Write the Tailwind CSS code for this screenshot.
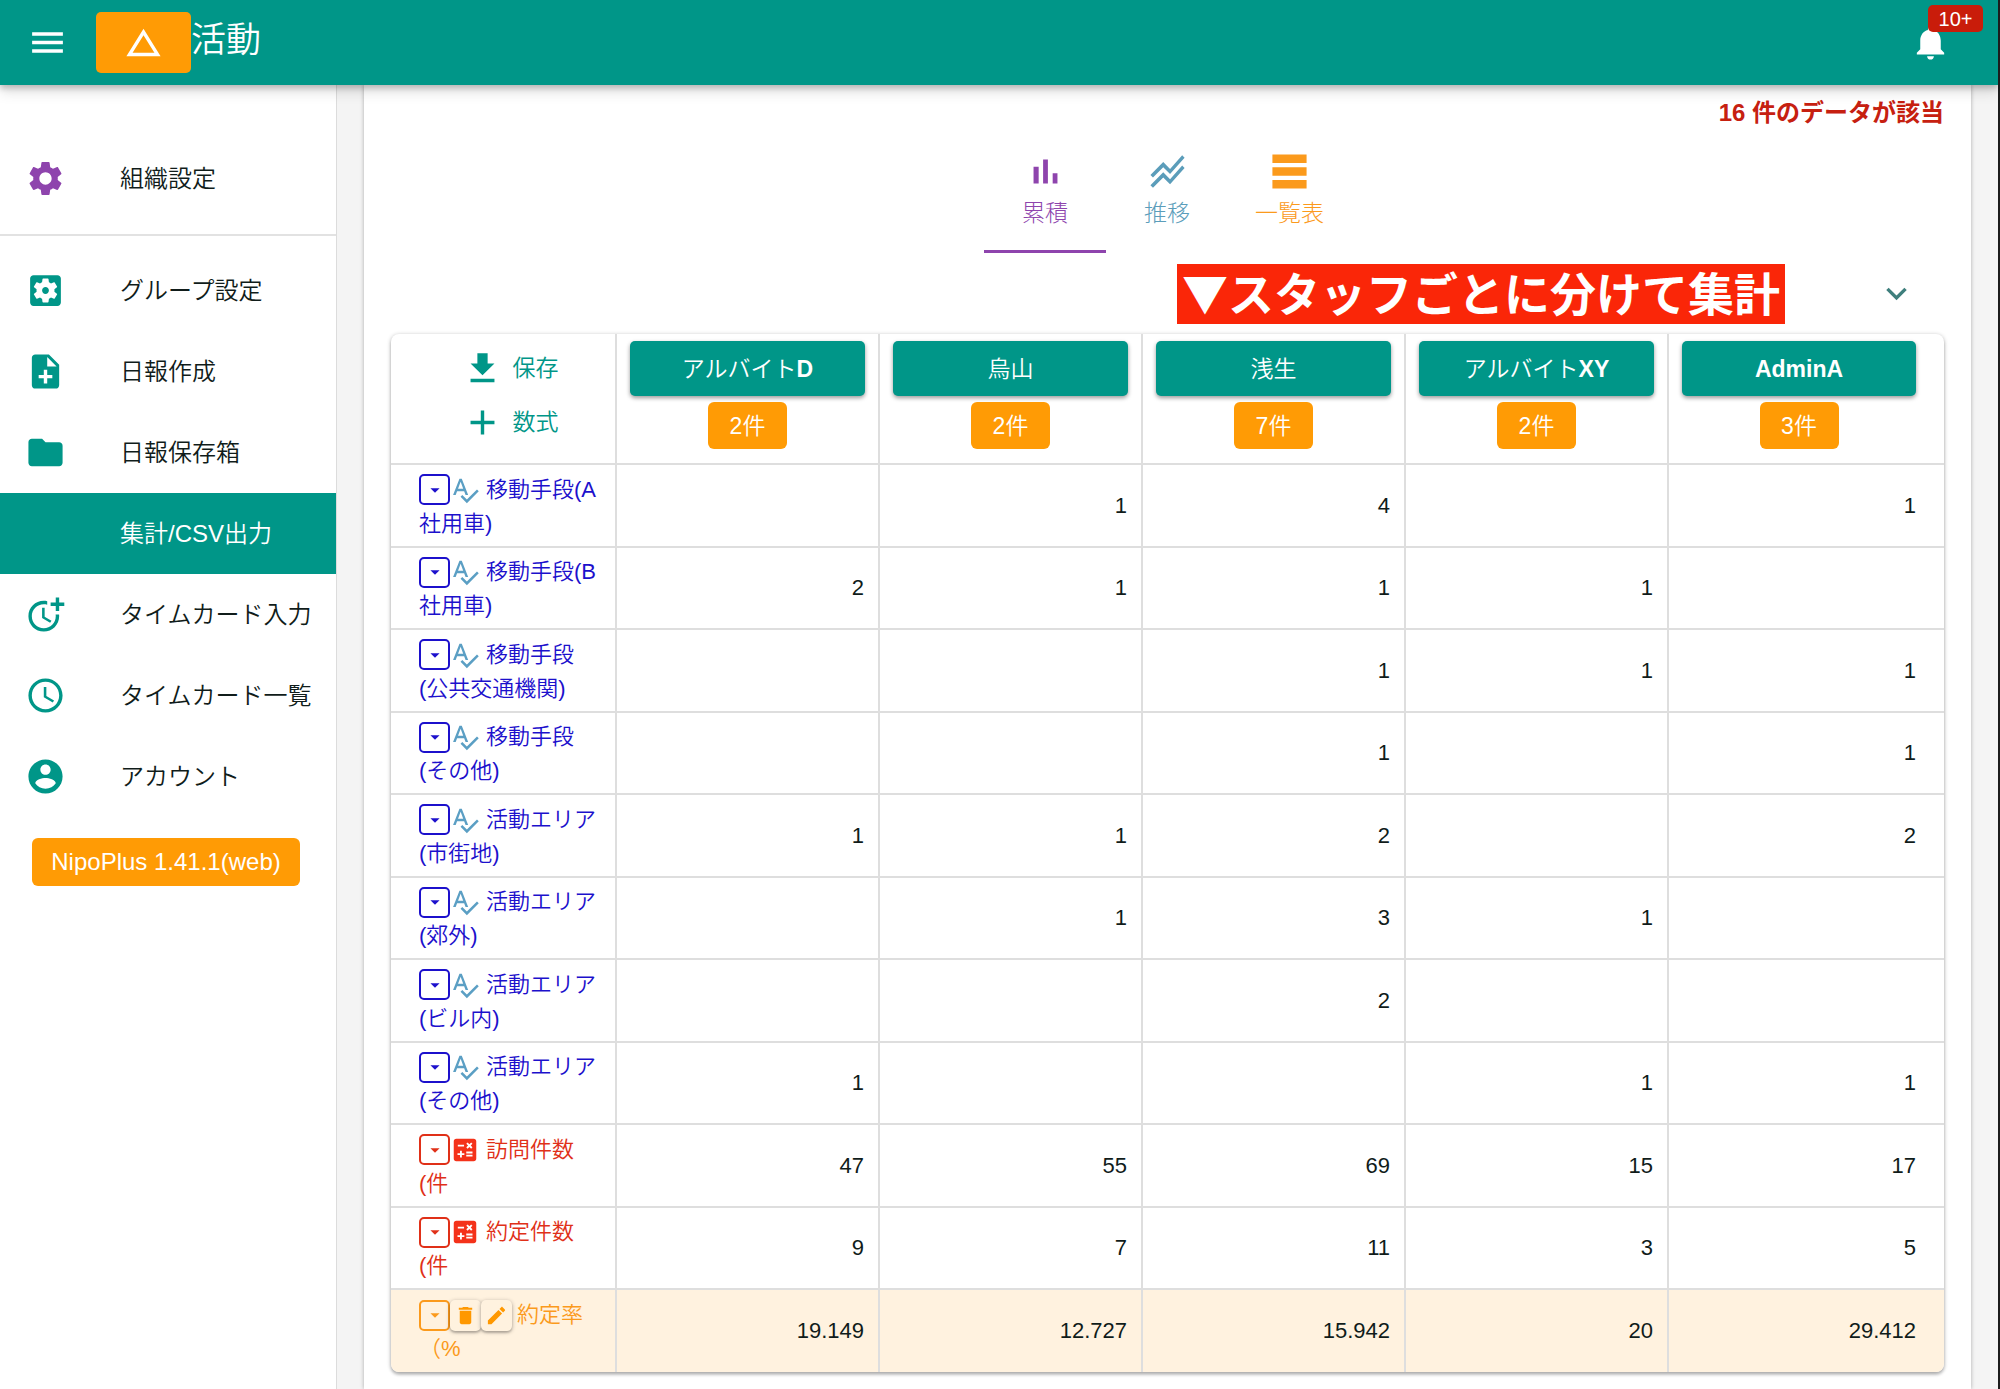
<!DOCTYPE html>
<html lang="ja">
<head>
<meta charset="utf-8">
<meta name="viewport" content="width=device-width, initial-scale=1">
<title>NipoPlus</title>
<script src="https://cdn.jsdelivr.net/npm/@tailwindcss/browser@4"></script>
</head>
<body class="flex min-h-screen flex-col border-r-2 border-[#1c1c1c] bg-[#f4f4f4] font-['Liberation_Sans','Noto_Sans_CJK_JP',sans-serif] text-[23px] leading-[34px] font-[350] text-[#101c1a]">
<svg class="hidden" aria-hidden="true">
  <symbol id="i-menu" viewBox="0 0 24 24"><path d="M3 18h18v-2H3v2zm0-5h18v-2H3v2zm0-7v2h18V6H3z"/></symbol>
  <symbol id="i-triangle" viewBox="0 0 24 24"><path d="M12 7.77L18.39 18H5.61L12 7.77M12 4L2 20h20L12 4z"/></symbol>
  <symbol id="i-bell" viewBox="0 0 24 24"><path d="M12 22c1.1 0 2-.9 2-2h-4c0 1.1.89 2 2 2zm6-6v-5c0-3.07-1.64-5.64-4.5-6.32V4c0-.83-.67-1.5-1.500-1.500s-1.500.67-1.500 1.500v.68C7.630 5.360 6 7.920 6 11v5l-2 2v1h16v-1l-2-2z"/></symbol>
  <symbol id="i-settings" viewBox="0 0 24 24"><path d="M19.140 12.940c.04-.3.06-.61.06-.94 0-.32-.02-.64-.07-.94l2.030-1.580c.18-.14.23-.41.12-.61l-1.920-3.320c-.12-.22-.37-.29-.59-.22l-2.390.96c-.5-.38-1.030-.7-1.620-.94l-.36-2.540c-.04-.24-.24-.41-.48-.41h-3.840c-.24 0-.43.17-.47.41l-.36 2.540c-.59.24-1.130.57-1.620.94l-2.390-.96c-.22-.08-.47 0-.59.22L2.740 8.870c-.12.21-.08.47.12.61l2.030 1.580c-.05.3-.09.63-.09.94s.02.64.07.94l-2.030 1.580c-.18.14-.23.41-.12.61l1.920 3.320c.12.22.37.29.59.22l2.390-.96c.5.38 1.030.7 1.620.94l.36 2.540c.05.24.24.41.48.41h3.840c.24 0 .44-.17.47-.41l.36-2.540c.59-.24 1.130-.56 1.620-.94l2.390.96c.22.08.47 0 .59-.22l1.920-3.320c.12-.22.07-.47-.12-.61l-2.010-1.580zM12 15.600c-1.980 0-3.600-1.620-3.600-3.600s1.620-3.600 3.600-3.600 3.600 1.620 3.600 3.600-1.620 3.600-3.600 3.600z"/></symbol>
  <symbol id="i-settings-box" viewBox="0 0 24 24"><path d="M12 10c-1.100 0-2 .9-2 2s.9 2 2 2 2-.9 2-2-.9-2-2-2zm7-7H5c-1.110 0-2 .9-2 2v14c0 1.100.89 2 2 2h14c1.110 0 2-.9 2-2V5c0-1.100-.89-2-2-2zm-1.750 9c0 .23-.02.46-.05.68l1.480 1.160c.13.11.17.3.08.45l-1.400 2.420c-.09.15-.27.21-.43.15l-1.740-.7c-.36.28-.76.51-1.180.69l-.26 1.850c-.03.17-.18.3-.35.3h-2.800c-.17 0-.32-.13-.35-.29l-.26-1.850c-.43-.18-.82-.41-1.180-.69l-1.740.7c-.16.06-.34 0-.43-.15l-1.400-2.420c-.09-.15-.05-.34.08-.45l1.480-1.160c-.03-.23-.05-.46-.05-.69 0-.23.02-.46.05-.68l-1.480-1.160c-.13-.11-.17-.3-.08-.45l1.400-2.420c.09-.15.27-.21.43-.15l1.740.7c.36-.28.76-.51 1.180-.69l.26-1.850c.03-.17.18-.3.35-.3h2.800c.17 0 .32.13.35.29l.26 1.850c.43.18.82.41 1.180.69l1.740-.7c.16-.06.34 0 .43.15l1.400 2.420c.09.15.05.34-.08.45l-1.480 1.160c.03.23.05.46.05.69z"/></symbol>
  <symbol id="i-note-add" viewBox="0 0 24 24"><path d="M14 2H6c-1.100 0-1.990.9-1.990 2L4 20c0 1.100.89 2 1.990 2H18c1.100 0 2-.9 2-2V8l-6-6zm2 14h-3v3h-2v-3H8v-2h3v-3h2v3h3v2zm-3-7V3.500L18.500 9H13z"/></symbol>
  <symbol id="i-folder" viewBox="0 0 24 24"><path d="M10 4H4c-1.100 0-1.990.9-1.990 2L2 18c0 1.100.9 2 2 2h16c1.100 0 2-.9 2-2V8c0-1.100-.9-2-2-2h-8l-2-2z"/></symbol>
  <symbol id="i-more-time" viewBox="0 0 24 24"><path d="M10 8v6l4.700 2.900.8-1.200-4-2.400V8z"/><path d="M17.920 12c.05.33.08.66.08 1 0 3.900-3.100 7-7 7s-7-3.100-7-7 3.100-7 7-7c.7 0 1.370.1 2 .29V4.230C12.360 4.080 11.690 4 11 4c-5 0-9 4-9 9s4 9 9 9 9-4 9-9c0-.34-.02-.67-.06-1h-2.020z"/><path d="M20 5V2h-2v3h-3v2h3v3h2V7h3V5z"/></symbol>
  <symbol id="i-clock" viewBox="0 0 24 24"><path d="M11.990 2C6.470 2 2 6.480 2 12s4.470 10 9.990 10C17.520 22 22 17.520 22 12S17.520 2 11.990 2zM12 20c-4.420 0-8-3.580-8-8s3.580-8 8-8 8 3.580 8 8-3.580 8-8 8zm.5-13H11v6l5.250 3.150.75-1.230-4.500-2.670z"/></symbol>
  <symbol id="i-account" viewBox="0 0 24 24"><path d="M12 2C6.480 2 2 6.480 2 12s4.480 10 10 10 10-4.480 10-10S17.520 2 12 2zm0 3c1.660 0 3 1.340 3 3s-1.340 3-3 3-3-1.340-3-3 1.340-3 3-3zm0 14.200c-2.500 0-4.710-1.280-6-3.220.03-1.990 4-3.080 6-3.080 1.990 0 5.970 1.090 6 3.080-1.290 1.940-3.500 3.220-6 3.220z"/></symbol>
  <symbol id="i-bars" viewBox="0 0 24 24"><path d="M5 9.200h3V19H5zM10.600 5h2.800v14h-2.800zm5.600 8H19v6h-2.800z"/></symbol>
  <symbol id="i-lines" viewBox="0 0 24 24"><path d="M2 19.990l7.500-7.510 4 4 7.090-7.970L22 9.920l-8.500 9.560-4-4-6 6.010-1.500-1.500zm1.500-4.500l6-6.010 4 4L22 3.920l-1.410-1.410-7.090 7.970-4-4L2 13.990l1.500 1.500z"/></symbol>
  <symbol id="i-rows" viewBox="0 0 24 24"><path d="M2 2h20v5H2zM2 9.500h20v5H2zM2 17h20v5H2z"/></symbol>
  <symbol id="i-chevron" viewBox="0 0 24 24"><path d="M16.590 8.590L12 13.170 7.410 8.590 6 10l6 6 6-6z"/></symbol>
  <symbol id="i-download" viewBox="0 0 24 24"><path d="M19 9h-4V3H9v6H5l7 7 7-7zM5 18v2h14v-2H5z"/></symbol>
  <symbol id="i-add" viewBox="0 0 24 24"><path d="M19 13h-6v6h-2v-6H5v-2h6V5h2v6h6v2z"/></symbol>
  <symbol id="i-drop" viewBox="0 0 24 24"><path d="M7 10l5 5 5-5z"/></symbol>
  <symbol id="i-spell" viewBox="0 0 24 24"><path d="M12.450 16h2.090L9.430 3H7.570L2.460 16h2.090l1.120-3h5.640l1.140 3zm-6.020-5L8.500 5.480 10.570 11H6.430zm15.160.59l-8.090 8.090L9.830 16l-1.410 1.410 5.090 5.090L23 13l-1.410-1.410z"/></symbol>
  <symbol id="i-calc" viewBox="0 0 24 24"><path d="M19 3H5c-1.100 0-2 .9-2 2v14c0 1.100.9 2 2 2h14c1.100 0 2-.9 2-2V5c0-1.100-.9-2-2-2zm-5.970 4.060L14.090 6l1.410 1.410L16.910 6l1.060 1.060-1.410 1.410 1.410 1.410-1.060 1.060-1.410-1.400-1.410 1.410-1.060-1.060 1.410-1.410-1.410-1.420zm-6.780.66h5v1.500h-5v-1.500zM11.500 16h-2v2H8v-2H6v-1.500h2v-2h1.500v2h2V16zm6.500 1.250h-5v-1.500h5v1.500zm0-2.500h-5v-1.500h5v1.500z"/></symbol>
  <symbol id="i-delete" viewBox="0 0 24 24"><path d="M6 19c0 1.100.9 2 2 2h8c1.100 0 2-.9 2-2V7H6v12zM19 4h-3.500l-1-1h-5l-1 1H5v2h14V4z"/></symbol>
  <symbol id="i-edit" viewBox="0 0 24 24"><path d="M3 17.250V21h3.750L17.810 9.940l-3.750-3.750L3 17.250zM20.710 7.040c.39-.39.39-1.020 0-1.410l-2.340-2.340c-.39-.39-1.020-.39-1.410 0l-1.830 1.830 3.750 3.750 1.830-1.830z"/></symbol>
</svg>

<header class="relative z-10 flex h-[85px] shrink-0 items-center bg-[#009688] pr-[34px] pl-[27px] text-white shadow-[0_3px_6px_rgba(0,0,0,0.22),0_8px_12px_rgba(0,0,0,0.1)]">
  <button type="button" aria-label="メニュー" class="size-[41px]"><svg class="size-full fill-current"><use href="#i-menu"/></svg></button>
  <div class="ml-7 flex h-[61px] w-[95px] items-center justify-center rounded-[5px] bg-[#ff9b05]"><svg class="size-[41px] fill-current"><use href="#i-triangle"/></svg></div>
  <h1 class="pb-[6px] text-[35px] leading-[44px] font-[350]">活動</h1>
  <button type="button" aria-label="通知" class="relative mr-[13px] ml-auto size-[41px]">
    <svg class="size-full fill-current"><use href="#i-bell"/></svg>
    <span class="absolute -top-[17px] left-[18px] flex h-[27px] w-[55px] items-center justify-center rounded-[5px] bg-[#c91c0a] text-[20px]">10+</span>
  </button>
</header>

<div class="flex grow">
  <nav class="w-[337px] shrink-0 border-r border-[#dcdcdc] bg-white text-[24px]">
    <div class="border-b-2 border-[#e2e2e2] pt-[53px] pb-[15px]">
      <a href="#" class="flex h-[81px] items-center gap-[54px] pl-[25px]"><svg class="size-[41px] shrink-0 fill-[#8e44ad]"><use href="#i-settings"/></svg>組織設定</a>
    </div>
    <div class="pt-[14px]">
      <a href="#" class="flex h-[81px] items-center gap-[54px] pl-[25px]"><svg class="size-[41px] shrink-0 fill-[#009688]"><use href="#i-settings-box"/></svg>グループ設定</a>
      <a href="#" class="flex h-[81px] items-center gap-[54px] pl-[25px]"><svg class="size-[41px] shrink-0 fill-[#009688]"><use href="#i-note-add"/></svg>日報作成</a>
      <a href="#" class="flex h-[81px] items-center gap-[54px] pl-[25px]"><svg class="size-[41px] shrink-0 fill-[#009688]"><use href="#i-folder"/></svg>日報保存箱</a>
      <a href="#" aria-current="page" class="flex h-[81px] items-center bg-[#009688] pl-[120px] text-white">集計/CSV出力</a>
      <a href="#" class="flex h-[81px] items-center gap-[54px] pl-[25px]"><svg class="size-[41px] shrink-0 fill-[#009688]"><use href="#i-more-time"/></svg>タイムカード入力</a>
      <a href="#" class="flex h-[81px] items-center gap-[54px] pl-[25px]"><svg class="size-[41px] shrink-0 fill-[#009688]"><use href="#i-clock"/></svg>タイムカード一覧</a>
      <a href="#" class="flex h-[81px] items-center gap-[54px] pl-[25px]"><svg class="size-[41px] shrink-0 fill-[#009688]"><use href="#i-account"/></svg>アカウント</a>
    </div>
    <div class="mt-[21px] ml-8 flex h-12 w-[268px] items-center justify-center rounded-[6px] bg-[#ff9b05] text-white">NipoPlus 1.41.1(web)</div>
  </nav>

  <main class="mr-[27px] ml-[27px] min-w-0 grow bg-white px-[27px] pt-[11px] pb-4 shadow-[0_0_4px_rgba(0,0,0,0.3)]">
    <p class="text-right text-[24px] font-bold text-[#c62010]">16 件のデータが該当</p>
    <div role="tablist" class="flex h-[123px] justify-center">
      <button type="button" role="tab" aria-selected="true" class="flex min-w-[122px] flex-col items-center border-b-[3px] border-[#8e44ad] px-[27px] pt-[21px] font-light text-[#8e44ad]"><svg class="size-[41px] fill-current"><use href="#i-bars"/></svg><span class="mt-1">累積</span></button>
      <button type="button" role="tab" aria-selected="false" class="flex min-w-[122px] flex-col items-center border-b-[3px] border-transparent px-[27px] pt-[21px] font-light text-[#5b9dba]"><svg class="size-[41px] fill-current"><use href="#i-lines"/></svg><span class="mt-1">推移</span></button>
      <button type="button" role="tab" aria-selected="false" class="flex min-w-[122px] flex-col items-center border-b-[3px] border-transparent px-[27px] pt-[21px] font-light text-[#fb9a1c]"><svg class="size-[41px] fill-current"><use href="#i-rows"/></svg><span class="mt-1">一覧表</span></button>
    </div>
    <div class="flex h-[81px] items-center justify-end gap-[91px] pr-[27px]">
      <strong class="flex h-[60px] items-start bg-[#fa2608] px-[5px] font-['Noto_Sans_CJK_JP',sans-serif] text-[46px] leading-[54px] font-bold whitespace-nowrap text-white">▼スタッフごとに分けて集計</strong>
      <button type="button" aria-label="開く" class="size-[41px]"><svg class="size-full fill-[#3f7f7d]"><use href="#i-chevron"/></svg></button>
    </div>

    <div class="overflow-hidden rounded-[8px] shadow-[0_1px_4px_rgba(0,0,0,0.3),0_3px_3px_rgba(0,0,0,0.15)]">
      <table class="w-full table-fixed border-collapse text-[22px]">
        <colgroup><col class="w-[225px]"><col><col><col><col><col class="w-[276px]"></colgroup>
        <thead><tr id="head" class="h-[130px] align-top">
          <td class="pt-[7px] pr-[13px] pl-[27px] text-[23px] text-[#009688]">
            <button type="button" class="flex h-[54px] w-full items-center justify-center gap-[10px]"><svg class="size-[41px] fill-current"><use href="#i-download"/></svg>保存</button>
            <button type="button" class="flex h-[54px] w-full items-center justify-center gap-[10px]"><svg class="size-[41px] fill-current"><use href="#i-add"/></svg>数式</button>
          </td>
        </tr></thead>
        <tbody id="rows"></tbody>
      </table>
    </div>
  </main>
</div>

<script>
const staff = [
  ['アルバイト', 'D', 2], ['烏山', '', 2], ['浅生', '', 7], ['アルバイト', 'XY', 2], ['', 'AdminA', 3],
];
const rows = [
  ['text', '移動手段(A', '社用車)', ['', '1', '4', '', '1']],
  ['text', '移動手段(B', '社用車)', ['2', '1', '1', '1', '']],
  ['text', '移動手段', '(公共交通機関)', ['', '', '1', '1', '1']],
  ['text', '移動手段', '(その他)', ['', '', '1', '', '1']],
  ['text', '活動エリア', '(市街地)', ['1', '1', '2', '', '2']],
  ['text', '活動エリア', '(郊外)', ['', '1', '3', '1', '']],
  ['text', '活動エリア', '(ビル内)', ['', '', '2', '', '']],
  ['text', '活動エリア', '(その他)', ['1', '', '', '1', '1']],
  ['calc', '訪問件数', '(件', ['47', '55', '69', '15', '17']],
  ['calc', '約定件数', '(件', ['9', '7', '11', '3', '5']],
  ['formula', '約定率', '（%', ['19.149', '12.727', '15.942', '20', '29.412']],
];
const tone = { text: 'text-[#1c10cc]', calc: 'text-[#e03018]', formula: 'text-[#fb9a1c]' };
const extra = {
  text: '<svg class="mr-[6px] size-[30px] fill-[#5b9fc4]"><use href="#i-spell"/></svg>',
  calc: '<svg class="mr-[6px] size-[30px] fill-[#f4321a]"><use href="#i-calc"/></svg>',
  formula: '<button type="button" aria-label="削除" class="flex size-[31px] items-center justify-center rounded-[5px] shadow-[0_1px_4px_rgba(0,0,0,0.3),0_2px_2px_rgba(0,0,0,0.15)] bg-[#fff2df]"><svg class="size-[23px] fill-[#ff9800]"><use href="#i-delete"/></svg></button>' +
    '<button type="button" aria-label="編集" class="mr-[5px] flex size-[31px] items-center justify-center rounded-[5px] shadow-[0_1px_4px_rgba(0,0,0,0.3),0_2px_2px_rgba(0,0,0,0.15)] bg-[#fff2df]"><svg class="size-[23px] fill-[#ff9800]"><use href="#i-edit"/></svg></button>',
};
document.getElementById('head').insertAdjacentHTML('beforeend', staff.map(([kana, latin, n]) => `
  <th scope="col" class="border-l-2 border-[#dedede] px-[13px] pt-[7px] font-[350] text-white last:pr-[28px]">
    <button type="button" class="flex h-[55px] w-full items-center justify-center rounded-[5px] bg-[#009688] text-[23px] shadow-[0_2px_4px_rgba(0,0,0,0.4)]">${kana}<b class="font-bold">${latin}</b></button>
    <span class="mx-auto mt-[6px] flex h-[47px] w-[79px] items-center justify-center rounded-[6px] bg-[#ff9b05] text-[23px]">${n}件</span>
  </th>`).join(''));
document.getElementById('rows').innerHTML = rows.map(([kind, first, second, values]) => `
  <tr class="border-t-2 border-[#dedede] odd:h-[83px] even:h-[82px] last:bg-[#fff2df]">
    <th scope="row" class="pr-1 pl-[28px] pt-[2px] text-left font-[350] ${tone[kind]}">
      <div class="flex h-[34px] items-center whitespace-nowrap"><button type="button" aria-label="操作" class="flex size-[31px] items-center justify-center rounded-[5px] border-2 border-current"><svg class="size-[22px] shrink-0 fill-current"><use href="#i-drop"/></svg></button>${extra[kind]}<span>${first}</span></div>
      <div class="h-[34px]">${second}</div>
    </th>
    ${values.map(v => `<td class="border-l-2 border-[#dedede] pr-[14px] text-right last:pr-[28px]">${v}</td>`).join('')}
  </tr>`).join('');
</script>
</body>
</html>
